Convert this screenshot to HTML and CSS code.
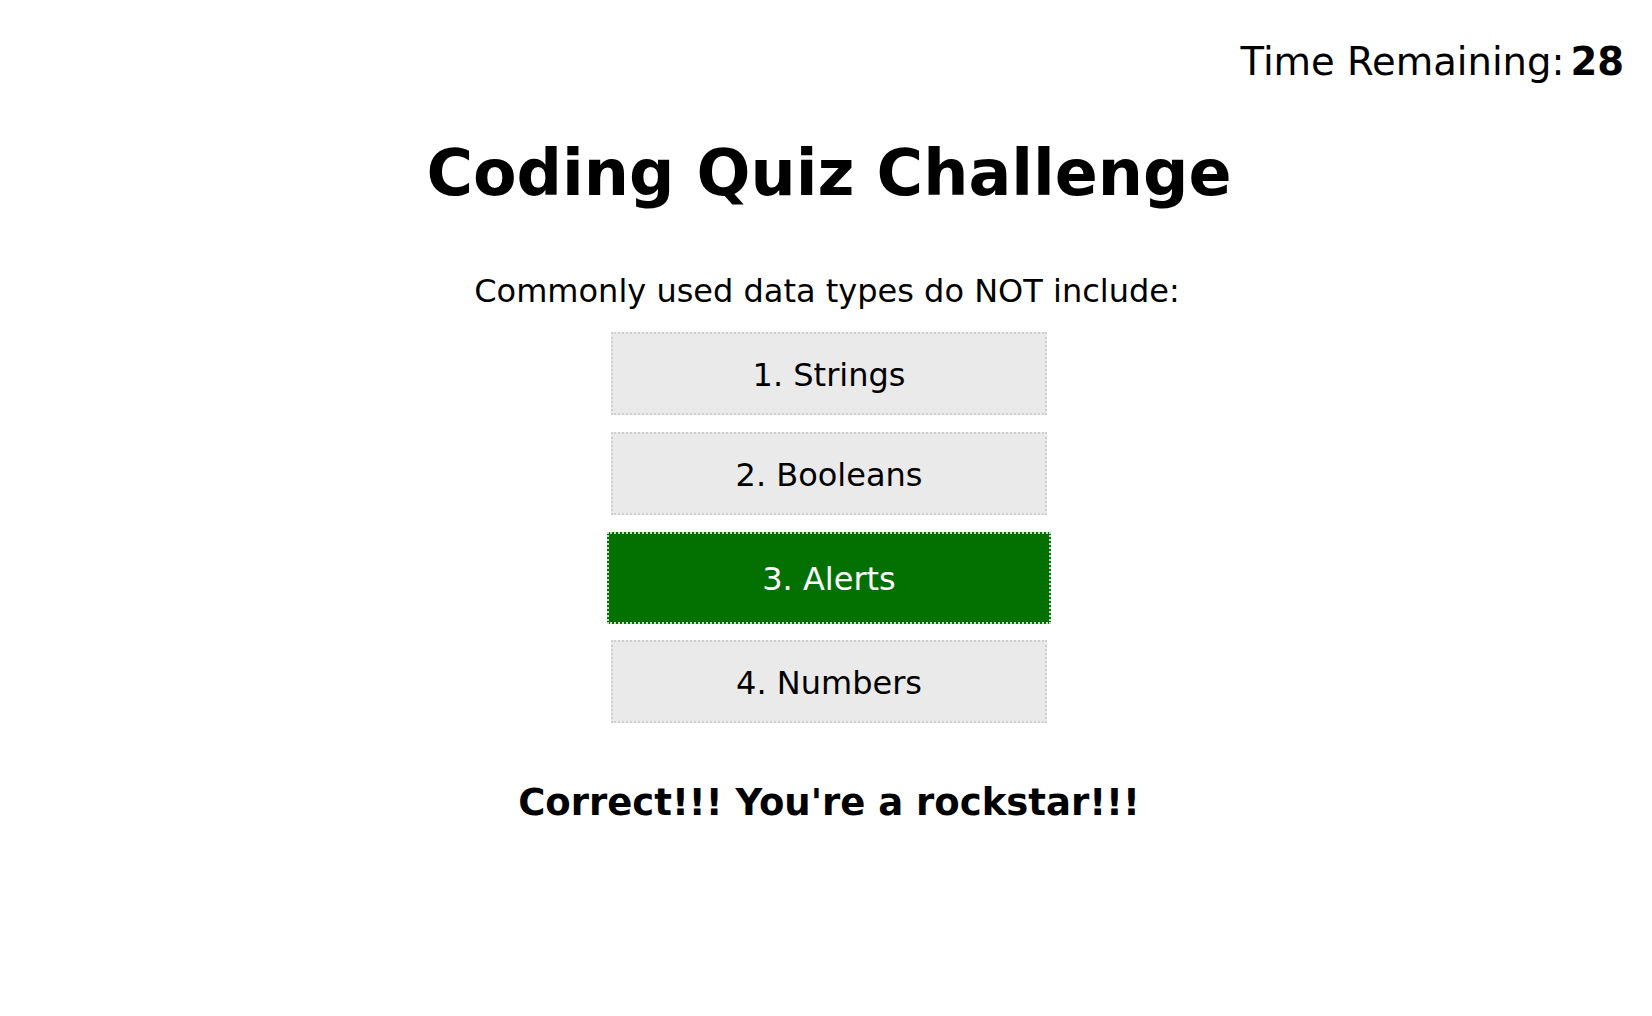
FILE: index.html
```html
<!DOCTYPE html>
<html lang="en">
<head>
<meta charset="utf-8">
<title>Coding Quiz Challenge</title>
<link rel="stylesheet" href="styles.css">
</head>
<body>
<header class="top">
  <div class="timer">Time Remaining:<span class="time">28</span></div>
</header>
<main class="quiz">
  <h1 class="title">Coding Quiz Challenge</h1>
  <p class="question">Commonly used data types do NOT include:</p>
  <div class="choices">
    <button class="choice">1. Strings</button>
    <button class="choice">2. Booleans</button>
    <button class="choice correct">3. Alerts</button>
    <button class="choice">4. Numbers</button>
  </div>
  <p class="feedback">Correct!!! You're a rockstar!!!</p>
</main>
</body>
</html>
```
FILE: styles.css
```css
html, body {
  margin: 0;
  padding: 0;
  background: #ffffff;
  color: #000000;
  font-family: "DejaVu Sans", Verdana, sans-serif;
}

.top {
  display: flex;
  justify-content: flex-end;
  padding: 40px 28px 0 0;
}

.timer {
  font-size: 38.5px;
  line-height: 44px;
}

.time {
  font-weight: bold;
  margin-left: 6px;
}

.quiz {
  display: flex;
  flex-direction: column;
  align-items: center;
  padding-left: 6px;
}

.title {
  margin: 52px 0 0 0;
  font-size: 63.5px;
  line-height: 74px;
  font-weight: bold;
}

.question {
  margin: 63px 0 0 0;
  padding-right: 4px;
  font-size: 32px;
  line-height: 37px;
}

.choices {
  display: flex;
  flex-direction: column;
  align-items: center;
  gap: 17px;
  margin-top: 22px;
}

.choice {
  box-sizing: border-box;
  width: 436px;
  padding: 23px 10px 19px;
  font-family: "DejaVu Sans", Verdana, sans-serif;
  font-size: 32px;
  line-height: 37px;
  color: #000000;
  background: #eaeaea;
  border: 2px dotted #cfcfcf;
  border-radius: 0;
  text-align: center;
}

.choice.correct {
  width: 444px;
  padding: 27px 10px 24px;
  background: #027102;
  color: #ffffff;
  border-color: #d4d4d4;
  margin-bottom: -1px;
}

.feedback {
  margin: 59px 0 0 0;
  font-size: 37px;
  line-height: 42px;
  font-weight: bold;
}
```
